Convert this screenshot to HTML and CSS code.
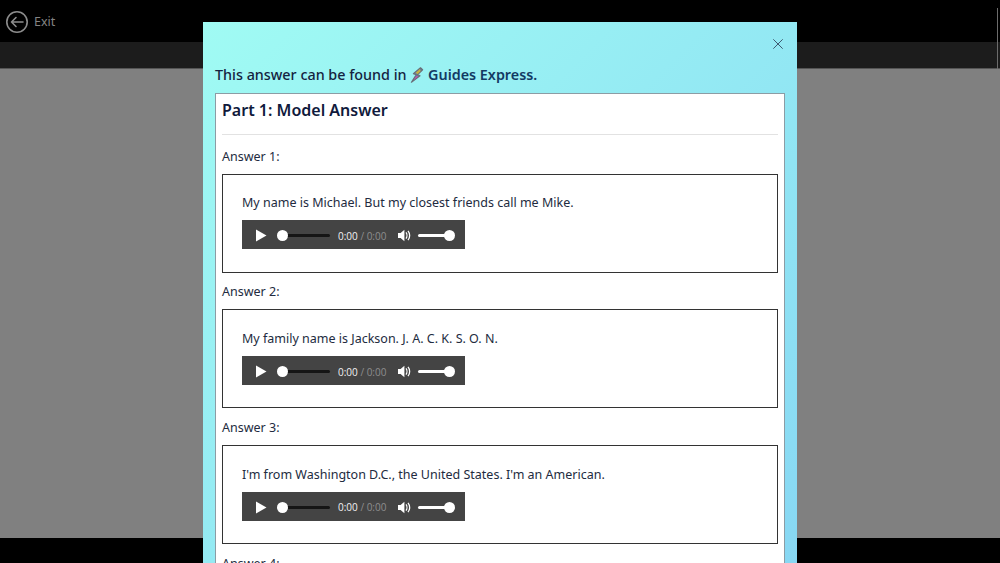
FILE: index.html
```html
<!DOCTYPE html>
<html lang="en">
<head>
<meta charset="utf-8">
<title>Part 1: Model Answer</title>
<link rel="stylesheet" href="styles.css">
</head>
<body>
<div class="page">
  <header class="topbar">
    <svg class="back-icon" width="24" height="24" viewBox="0 0 24 24" fill="none" stroke="#8c8c8c" stroke-width="1.6" stroke-linecap="round" stroke-linejoin="round"><circle cx="12" cy="12" r="10.2"/><path d="M18 12H6.5M11 7.5 6.5 12l4.5 4.5"/></svg>
    <span class="exit">Exit</span>
  </header>
  <div class="subbar"></div>
  <main class="stage"></main>
  <footer class="footer"></footer>
  <span class="edge-line"></span>

  <section class="modal">
    <div class="modal-head">
      <svg class="close" width="10" height="10" viewBox="0 0 10 10" fill="none" stroke="#3d5a70" stroke-width="1"><path d="M.3.3l9.4 9.4M9.7.3.3 9.7"/></svg>
    </div>
    <p class="found">This answer can be found in
      <svg class="bolt" width="14" height="16" viewBox="0 0 14 16" stroke-linejoin="round"><path d="M10.5.8 3.4 6.6l2.8 1.1-4.8 7.5 8.6-6.4-2.6-1.1 5.2-5z" fill="#5f7fa8" stroke="#6a6f78" stroke-width="1.2"/><path d="M10 2 5.4 6l2.4.9 2.8-2.8z" fill="#c7b13e"/><path d="M6 9.6 3.6 13l4.6-3.4-1.2-.6z" fill="#d04fa6"/></svg>
      <a class="guides">Guides Express.</a></p>
    <div class="card">
      <h2 class="title">Part 1: Model Answer</h2>
      <hr class="rule">
      <p class="label">Answer 1:</p>
      <div class="answer">
        <p class="text">My name is Michael. But my closest friends call me Mike.</p>
        <div class="player">
          <svg class="play" width="12" height="13" viewBox="0 0 12 13"><path d="M1 .5 11.5 6.5 1 12.5z" fill="#fff"/></svg>
          <span class="track"><span class="knob"></span></span>
          <span class="time">0:00<span class="dim"> / 0:00</span></span>
          <svg class="vol" width="13" height="13" viewBox="0 0 13 13" fill="none"><path d="M0 4h2.6L6.4.8v11.4L2.6 9H0z" fill="#fff"/><path d="M8 3.4c1.2 1.6 1.2 4.6 0 6.2M10 1.8c2.2 2.6 2.2 6.8 0 9.4" stroke="#fff" stroke-width="1.3"/></svg>
          <span class="volume"><span class="vknob"></span></span>
        </div>
      </div>
      <p class="label">Answer 2:</p>
      <div class="answer">
        <p class="text">My family name is Jackson. J. A. C. K. S. O. N.</p>
        <div class="player">
          <svg class="play" width="12" height="13" viewBox="0 0 12 13"><path d="M1 .5 11.5 6.5 1 12.5z" fill="#fff"/></svg>
          <span class="track"><span class="knob"></span></span>
          <span class="time">0:00<span class="dim"> / 0:00</span></span>
          <svg class="vol" width="13" height="13" viewBox="0 0 13 13" fill="none"><path d="M0 4h2.6L6.4.8v11.4L2.6 9H0z" fill="#fff"/><path d="M8 3.4c1.2 1.6 1.2 4.6 0 6.2M10 1.8c2.2 2.6 2.2 6.8 0 9.4" stroke="#fff" stroke-width="1.3"/></svg>
          <span class="volume"><span class="vknob"></span></span>
        </div>
      </div>
      <p class="label">Answer 3:</p>
      <div class="answer">
        <p class="text">I'm from Washington D.C., the United States. I'm an American.</p>
        <div class="player">
          <svg class="play" width="12" height="13" viewBox="0 0 12 13"><path d="M1 .5 11.5 6.5 1 12.5z" fill="#fff"/></svg>
          <span class="track"><span class="knob"></span></span>
          <span class="time">0:00<span class="dim"> / 0:00</span></span>
          <svg class="vol" width="13" height="13" viewBox="0 0 13 13" fill="none"><path d="M0 4h2.6L6.4.8v11.4L2.6 9H0z" fill="#fff"/><path d="M8 3.4c1.2 1.6 1.2 4.6 0 6.2M10 1.8c2.2 2.6 2.2 6.8 0 9.4" stroke="#fff" stroke-width="1.3"/></svg>
          <span class="volume"><span class="vknob"></span></span>
        </div>
      </div>
      <p class="label">Answer 4:</p>
    </div>
  </section>
</div>
</body>
</html>
```
FILE: styles.css
```css
* { box-sizing: border-box; }
html, body { margin: 0; height: 100%; overflow: hidden; }
body { font-family: "Noto Sans", sans-serif; color: #1c2340; background: #000; }
.page { position: relative; width: 1000px; height: 563px; overflow: hidden; display: flex; flex-direction: column; }
.topbar { height: 42px; background: #000; display: flex; align-items: center; gap: 5px; padding: 1px 0 0 5px; flex: none; }
.back-icon { flex: none; }
.exit { color: #848484; font-size: 12.5px; margin-top: -1px; }
.subbar { height: 26px; background: #1c1c1c; flex: none; }
.stage { flex: 1; background: #808080; border-top: 1px solid #555; }
.footer { height: 25px; background: #000; flex: none; }
.edge-line { position: absolute; left: 997px; top: 8px; width: 1px; height: 61px; background: #6c6c6c; }
.modal { position: absolute; left: 203px; top: 22px; width: 594px; height: 640px; background: linear-gradient(135deg, #a0fbf3 0%, #85d4f3 100%); padding: 0 12px; display: flex; flex-direction: column; }
.modal-head { height: 41px; display: flex; justify-content: flex-end; align-items: flex-start; padding: 17px 2px 0 0; flex: none; }
.found { margin: 0; height: 30px; font-size: 14.35px; line-height: 24px; font-weight: 500; color: #14233f; flex: none; }
.bolt { vertical-align: -3px; }
.guides { color: #123a63; font-weight: 600; }
.card { background: #fff; border: 1px solid #8c9ca4; padding: 5px 6px; width: 570px; flex: 1; }
.title { margin: 0; font-size: 16px; line-height: 22px; font-weight: 600; color: #101a3c; }
.rule { margin: 13px 0 12.5px; border: 0; border-top: 1px solid #e2e2e2; }
.label { margin: 10.6px 0 7.6px; font-size: 12.5px; line-height: 18.5px; color: #222b40; }
.answer { border: 1px solid #333; height: 99px; padding: 19.8px 19px 0; }
.text { margin: 0 0 8px; font-size: 12.5px; line-height: 18px; color: #222b40; }
.player { width: 223px; height: 29px; background: #444; display: flex; align-items: center; padding: 2px 0 0 13px; }
.play { flex: none; }
.track { position: relative; width: 50px; height: 3px; background: #151515; margin-left: 13px; border-radius: 2px; }
.knob { position: absolute; left: -3px; top: -4px; width: 11px; height: 11px; border-radius: 50%; background: #fff; }
.time { font-family: "Open Sans", sans-serif; font-size: 10px; color: #f2f2f2; margin-left: 8px; width: 54px; white-space: pre; }
.dim { color: #8e8e8e; }
.vol { flex: none; margin-left: 6px; }
.volume { position: relative; width: 35px; height: 3px; background: #fff; margin-left: 7px; border-radius: 2px; }
.vknob { position: absolute; right: -2px; top: -4px; width: 11px; height: 11px; border-radius: 50%; background: #fff; }
```
